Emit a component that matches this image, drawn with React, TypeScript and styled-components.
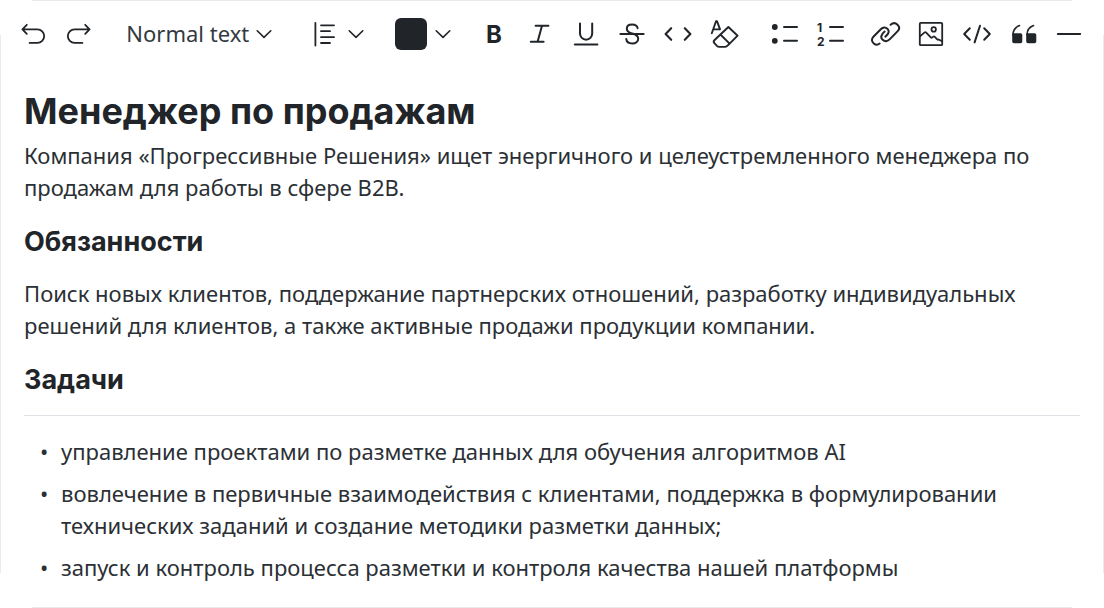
import React, { ReactNode } from "react";
import styled, { createGlobalStyle } from "styled-components";

const ink = "#212529";
const bodyInk = "#2b3035";
const edge = "#e9ecef";

const GlobalStyle = createGlobalStyle`
  *, *::before, *::after { box-sizing: border-box; }
  body {
    margin: 0;
    background: #fff;
    color: ${ink};
    font-family: "Noto Sans", sans-serif;
  }
`;

const Editor = styled.main`
  min-height: 100vh;
  background:
    linear-gradient(${edge}, ${edge}) top center / calc(100% - 64px) 1px no-repeat,
    linear-gradient(${edge}, ${edge}) bottom center / calc(100% - 64px) 1px no-repeat,
    linear-gradient(${edge}, ${edge}) left center / 1px calc(100% - 70px) no-repeat,
    linear-gradient(${edge}, ${edge}) right center / 1px calc(100% - 70px) no-repeat,
    #fff;
`;

const Toolbar = styled.div`
  display: flex;
  align-items: center;
  justify-content: space-between;
  height: 68px;
  padding: 0 17px;
`;

const Group = styled.div<{ $after?: number }>`
  display: flex;
  gap: 14px;
  padding-right: ${(p) => p.$after ?? 0}px;
`;

const ToolButton = styled.button<{ $pad?: number }>`
  display: flex;
  align-items: center;
  gap: 8px;
  height: 32px;
  padding: 0 ${(p) => p.$pad ?? 0}px;
  border: 0;
  background: none;
  color: inherit;
  cursor: pointer;
`;

const StyleField = styled.label`
  display: grid;
  align-items: center;
  margin: 0 8px;
`;

const StyleSelect = styled.select`
  grid-area: 1 / 1;
  width: 146px;
  height: 32px;
  padding: 0 0 2px;
  border: 0;
  appearance: none;
  background: none;
  color: #343a40;
  font: 22px/30px "Noto Sans", sans-serif;
`;

const SelectArrow = styled.span`
  grid-area: 1 / 1;
  justify-self: end;
  display: flex;
  pointer-events: none;
`;

const Swatch = styled.span`
  width: 32px;
  height: 32px;
  border-radius: 6px;
  background: ${ink};
`;

const Glyph = styled.svg`
  display: block;
  fill: none;
  stroke: currentColor;
  stroke-width: 1.8;
  stroke-linecap: round;
  stroke-linejoin: round;

  text {
    fill: currentColor;
    stroke: none;
    font-family: Inter, sans-serif;
    font-weight: 700;
  }
`;

const Content = styled.article`
  padding: 19px 24px 24px;
`;

const Title = styled.h1`
  margin: 0;
  font: 700 36px/48px Inter, sans-serif;
`;

const Subtitle = styled.h2`
  margin: 22px 0 0;
  font: 700 27px/34px Inter, sans-serif;
`;

const Paragraph = styled.p<{ $gap?: number }>`
  margin: ${(p) => p.$gap ?? 0}px 0 0;
  color: ${bodyInk};
  font-size: 22px;
  line-height: 32px;
`;

const Rule = styled.hr`
  margin: 18px 0 19px;
  border: 0;
  border-top: 1px solid #dee2e6;
`;

const Tasks = styled.ul`
  display: grid;
  gap: 10px;
  margin: 0;
  padding: 0;
  list-style: none;
`;

const Task = styled.li`
  display: flex;
  color: ${bodyInk};
  font-size: 22px;
  line-height: 32px;

  &::before {
    content: "•";
    flex: 0 0 37px;
    padding-left: 16px;
  }
`;

const Chevron = () => (
  <Glyph width="16" height="16" viewBox="0 0 16 16" aria-hidden="true">
    <path d="M1.2 4.8 8 11.4l6.8-6.6" strokeWidth="1.6" />
  </Glyph>
);

const Icon = ({ children }: { children: ReactNode }) => (
  <Glyph width="32" height="32" viewBox="0 0 32 32" aria-hidden="true">
    {children}
  </Glyph>
);

type Tool = { label: string; art: ReactNode };

const history: Tool[] = [
  { label: "Undo", art: <path d="M9.8 6.8 5.4 11.3l4.4 4.5M5.4 11.3h15a6.8 6.8 0 0 1 0 13.6h-7.8" /> },
  { label: "Redo", art: <path d="m22.2 6.8 4.4 4.5-4.4 4.5M26.6 11.3h-15a6.8 6.8 0 0 0 0 13.6h7.8" /> },
];

const marks: Tool[] = [
  { label: "Bold", art: <text x="8" y="25" fontSize="24">B</text> },
  { label: "Italic", art: <path d="M11.6 7.8h12.8M6.8 23.8h12.8M18 7.8l-4.4 16" strokeWidth="2" /> },
  { label: "Underline", art: <path d="M10 5.4v10.2a6.1 6.1 0 0 0 12.2 0V5.4M4.8 26.4h22.6" strokeWidth="2" /> },
  { label: "Strikethrough", art: <path d="M4.4 16h23.2M21.6 10.2c-.4-2.4-2.5-3.7-5.5-3.7-3.1 0-5.3 1.6-5.3 4.2 0 2.3 1.6 3.6 4.6 4.6l1.7.5c3.4 1 5.1 2.3 5.1 4.9 0 2.8-2.4 4.7-5.9 4.7-3.4 0-5.7-1.5-6-4.300" strokeWidth="2" /> },
  { label: "Inline code", art: <path d="M9.2 10.2 3.6 16l5.6 5.8M22.8 10.2l5.6 5.8-5.6 5.8" strokeWidth="2.1" /> },
  { label: "Clear formatting", art: <path d="M3.8 15.2 8 3.2h1l3 8.2M5.2 11.4h6M20.4 9l9.2 8.7-8 8-9.2-9.2zM12.4 16.5l-6 5.7q-1.4 1.5 0 3l2.5 2.7q1 1 2.4 1h5.5q1.4 0 2.4-1l2.4-2.2" strokeWidth="1.9" /> },
];

const lists: Tool[] = [
  { label: "Bulleted list", art: <><path d="M16 9h13M16 22.8h13" strokeWidth="2" /><g fill="currentColor" stroke="none"><circle cx="6.8" cy="9" r="2.9" /><circle cx="6.8" cy="22.8" r="2.9" /></g></> },
  { label: "Numbered list", art: <><path d="M16 9h13M16 22.8h13" strokeWidth="2" /><text x="3" y="14" fontSize="12">1</text><text x="3" y="28" fontSize="12">2</text></> },
];

const inserts: Tool[] = [
  { label: "Link", art: <path d="M10.6 25.6c-1.5 1.3-3.9 1.5-5.8-.1-2.4-2-2.4-4.6-.4-6.7l7.4-7.6c2.2-2.2 4.8-2.2 6.6-.4 2 2 1.9 4.7-2 7.8M21.600 6.8c2.1-1.9 4.9-2 6.9-.1s2 4.5.2 6.4l-7.8 8c-2.3 2.3-5.2 2.5-7.2.7-2.2-2-2.2-4.8 1.9-8.2" strokeWidth="2" /> },
  { label: "Image", art: <><rect x="4.8" y="4.8" width="22.4" height="22.4" rx="1" /><circle cx="18.7" cy="11.4" r="2.2" /><path d="m5 18.4 4.6-4q.8-.6 1.6.2l4.6 4.8q.7.6 1.5 0l1-.8q.8-.6 1.5.2l2.4 2.6q.7.6 1.4.1l3.4 1.8" /></> },
  { label: "Code block", art: <path d="M8.8 10.2 3.2 16l5.6 5.8M23.2 10.2l5.6 5.8-5.6 5.8M19 7.8l-5.4 16.6" strokeWidth="2" /> },
  { label: "Quote", art: <g fill="currentColor" strokeWidth="1.6"><path d="M6 16h7.5q1 0 1 1v6.5q0 1-1 1H7q-1 0-1-1zM20 16h7.5q1 0 1 1v6.5q0 1-1 1H21q-1 0-1-1z" /><path fill="none" d="M6 17c0-4.5 2.2-7.8 6.5-9.4M20 17c0-4.5 2.2-7.8 6.5-9.4" /></g> },
  { label: "Divider", art: <path d="M4.8 16h22.4" strokeWidth="2" /> },
];

const Tools = ({ items, after }: { items: Tool[]; after?: number }) => (
  <Group $after={after}>
    {items.map((t) => (
      <ToolButton key={t.label} type="button" aria-label={t.label}>
        <Icon>{t.art}</Icon>
      </ToolButton>
    ))}
  </Group>
);

const tasks = [
  "управление проектами по разметке данных для обучения алгоритмов AI",
  "вовлечение в первичные взаимодействия с клиентами, поддержка в формулировании технических заданий и создание методики разметки данных;",
  "запуск и контроль процесса разметки и контроля качества нашей платформы",
];

export default function App() {
  return (
    <>
      <GlobalStyle />
      <Editor>
        <Toolbar role="toolbar" aria-label="Formatting">
          <Tools items={history} />
          <StyleField>
            <StyleSelect aria-label="Text style" defaultValue="normal">
              <option value="normal">Normal text</option>
            </StyleSelect>
            <SelectArrow><Chevron /></SelectArrow>
          </StyleField>
          <ToolButton type="button" aria-label="Alignment" $pad={4}>
            <Icon>
              <path d="M7.4 4.8v22.8M13 7.3h13M13 13.2h9M13 19.2h13M13 25h9" />
            </Icon>
            <Chevron />
          </ToolButton>
          <ToolButton type="button" aria-label="Text color" $pad={4}>
            <Swatch />
            <Chevron />
          </ToolButton>
          <Tools items={marks} after={4} />
          <Tools items={lists} />
          <Tools items={inserts} after={2} />
        </Toolbar>
        <Content>
          <Title>Менеджер по продажам</Title>
          <Paragraph $gap={4}>
            Компания «Прогрессивные Решения» ищет энергичного и целеустремленного менеджера по продажам для работы в сфере B2B.
          </Paragraph>
          <Subtitle>Обязанности</Subtitle>
          <Paragraph $gap={18}>
            Поиск новых клиентов, поддержание партнерских отношений, разработку индивидуальных решений для клиентов, а также активные продажи продукции компании.
          </Paragraph>
          <Subtitle>Задачи</Subtitle>
          <Rule />
          <Tasks>
            {tasks.map((t) => (
              <Task key={t}>{t}</Task>
            ))}
          </Tasks>
        </Content>
      </Editor>
    </>
  );
}
